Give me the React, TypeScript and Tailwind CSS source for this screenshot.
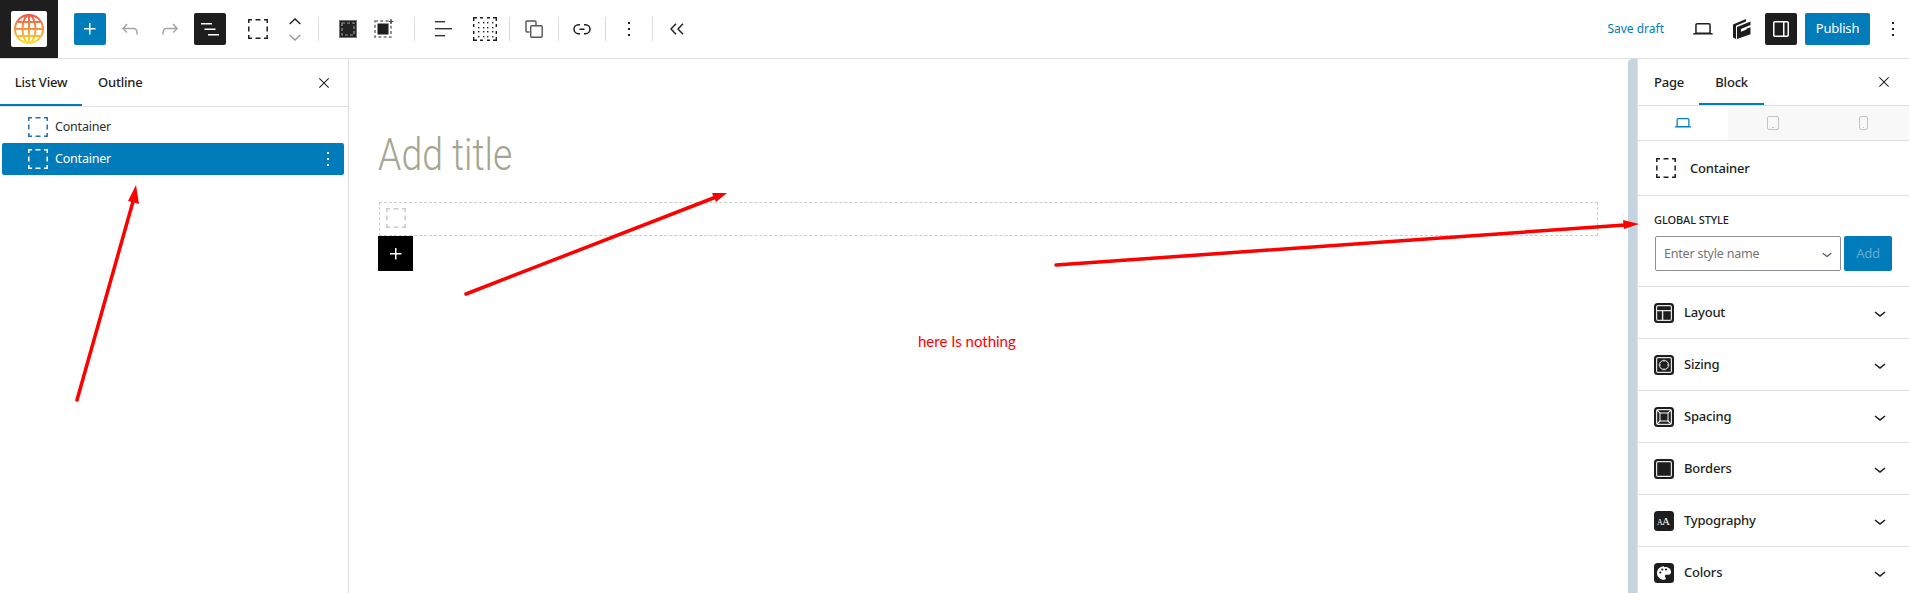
import React from "react";

function Wp({ d, className = "w-6 h-6", fill = "currentColor" }: { d: string; className?: string; fill?: string }) {
  return (
    <svg viewBox="0 0 24 24" className={className} fill={fill}>
      <path d={d} />
    </svg>
  );
}

const plus = "M11 12.5V17.5H12.5V12.5H17.5V11H12.5V6H11V11H6V12.5H11Z";
const undo = "M18.3 11.7c-.6-.6-1.4-.9-2.3-.9H6.7l2.9-3.3-1.1-1-4.5 5L8.5 16l1-1-2.7-2.7H16c.5 0 .9.2 1.3.5 1 1 1 3.4 1 4.5v.3h1.5v-.2c0-1.5 0-4.3-1.5-5.7z";
const redo = "M15.6 6.5l-1.1 1 2.9 3.3H8c-.9 0-1.7.3-2.3.9-1.4 1.5-1.4 4.2-1.4 5.6v.2h1.5v-.3c0-1.1 0-3.5 1-4.5.3-.3.7-.5 1.3-.5h9.2L14.5 15l1.1 1.1 4.6-4.6-4.6-5z";
const listView = "M3 6h11v1.5H3V6Zm3.5 5.5h11V13h-11v-1.5ZM21 17H10v1.5h11V17Z";
const close = "m13.06 12 6.47-6.47-1.06-1.06L12 10.94 5.53 4.47 4.47 5.53 10.94 12l-6.47 6.47 1.06 1.06L12 13.06l6.47 6.47 1.06-1.06L13.06 12Z";
const more = "M13 19h-2v-2h2v2zm0-6h-2v-2h2v2zm0-6h-2V5h2v2z";
const link = "M10 17.389H8.444A5.194 5.194 0 1 1 8.444 7H10v1.5H8.444a3.694 3.694 0 0 0 0 7.389H10v1.5ZM14 7h1.556a5.194 5.194 0 0 1 0 10.39H14v-1.5h1.556a3.694 3.694 0 0 0 0-7.39H14V7Zm-4.5 6h5v-1.5h-5V13Z";
const chevronDown = "M17.5 11.6L12 16l-5.5-4.4.9-1.2L12 14l4.5-3.6 1 1.2z";
const laptop = "M20.5 16h-.7V8c0-1.1-.9-2-2-2H6.2c-1.1 0-2 .9-2 2v8h-.7c-.8 0-1.5.7-1.5 1.5h20c0-.8-.7-1.5-1.5-1.5zM5.7 8c0-.3.2-.5.5-.5h11.6c.3 0 .5.2.5.5v7.6H5.7V8z";
const drawer = "M18 4H6c-1.1 0-2 .9-2 2v12c0 1.1.9 2 2 2h12c1.1 0 2-.9 2-2V6c0-1.1-.9-2-2-2zm-4 14.5H6c-.3 0-.5-.2-.5-.5V6c0-.3.2-.5.5-.5h8v13zm4.5-.5c0 .3-.2.5-.5.5h-2.5v-13H18c.3 0 .5.2.5.5v12z";

function DashedBox({ className = "w-5 h-5", width = 1.5 }: { className?: string; width?: number }) {
  return (
    <svg viewBox="0 0 20 20" className={className} fill="none" stroke="currentColor" strokeWidth={width}>
      <path d="M.8 4V.8H4M7.5.8h5M16 .8h3.2V4M19.2 7.5v5M19.2 16v3.2H16M12.5 19.2h-5M4 19.2H.8V16M.8 12.5v-5" />
    </svg>
  );
}

function Logo() {
  return (
    <svg viewBox="0 0 32 32" className="w-8 h-8" fill="none" stroke="url(#globe)" strokeWidth="2">
      <defs>
        <linearGradient id="globe" gradientUnits="userSpaceOnUse" x1="0" y1="2" x2="0" y2="30">
          <stop offset="0" stopColor="#ee5a4a" />
          <stop offset="0.55" stopColor="#f89a3c" />
          <stop offset="1" stopColor="#fde021" />
        </linearGradient>
      </defs>
      <circle cx="16" cy="16" r="14" />
      <ellipse cx="16" cy="16" rx="6.5" ry="14" />
      <path d="M16 2.5v27M2.5 16h27M4.5 9h23M4.5 23h23" />
    </svg>
  );
}

function Divider() {
  return <div className="w-px h-6 bg-[#dcdcdc]" />;
}

function ParentIcon() {
  return (
    <svg viewBox="0 0 18 18" className="w-[18px] h-[18px]">
      <rect x="0.5" y="0.5" width="17" height="17" fill="#222" stroke="#777" />
      <rect x="3" y="3" width="12" height="12" fill="none" stroke="#999" strokeWidth="1.2" strokeDasharray="3 2" />
    </svg>
  );
}

function InnerIcon() {
  return (
    <svg viewBox="0 0 20 20" className="w-[20px] h-[20px]">
      <rect x="1" y="2" width="16" height="16" fill="none" stroke="#777" strokeWidth="1.6" strokeDasharray="3 2.2" />
      <rect x="3.5" y="4.5" width="11" height="11" fill="#1e1e1e" />
      <path d="M17 0v5M14.5 2.5h5" stroke="#444" strokeWidth="1.2" />
    </svg>
  );
}

function AlignIcon() {
  return (
    <svg viewBox="0 0 18 16" className="w-[18px] h-[16px]" fill="#333">
      <rect x="0" y="0" width="10" height="1.4" />
      <rect x="0" y="7" width="17" height="1.4" />
      <rect x="0" y="14" width="10" height="1.4" />
    </svg>
  );
}

function GridIcon() {
  const dots = [5, 10, 14, 19];
  return (
    <svg viewBox="0 0 24 24" className="w-6 h-6" fill="#1e1e1e">
      <path d="M.7 4V.7H4M7 .7h3M14 .7h3M20 .7h3.3V4M23.3 7v3M23.3 14v3M23.3 20v3.3H20M17 23.3h-3M10 23.3H7M4 23.3H.7V20M.7 17v-3M.7 10V7" fill="none" stroke="#1e1e1e" strokeWidth="1.4" />
      {dots.map((y) => dots.map((x) => <rect key={x + "-" + y} x={x} y={y} width="1.4" height="1.4" />))}
    </svg>
  );
}

function DuplicateIcon() {
  return (
    <svg viewBox="0 0 18 18" className="w-[18px] h-[18px]" fill="none" stroke="#555" strokeWidth="1.4">
      <path d="M4.5 12H2a1 1 0 0 1-1-1V2a1 1 0 0 1 1-1h8a1 1 0 0 1 1 1v3" />
      <rect x="5.7" y="5.7" width="11.5" height="11.5" rx="1" />
    </svg>
  );
}

function BrandIcon() {
  return (
    <svg viewBox="0 0 18 20" className="w-[18px] h-[20px]" fill="#1e1e1e">
      <path d="M0 5.5 13 0v2.5L3 6.8V20l-3-1.5Z" />
      <path d="M4 8 17.5 2.5V6L8 10v2.8l5.5-2.3v-.7l4-1.6v7L4 20Z" />
    </svg>
  );
}

function GoBackIcon() {
  return (
    <svg viewBox="0 0 14 12" className="w-[14px] h-[12px]" fill="none" stroke="#1e1e1e" strokeWidth="1.4">
      <path d="M6 .7 1 6l5 5.3M13 .7 8 6l5 5.3" />
    </svg>
  );
}

function PanelIcon({ children }: { children: React.ReactNode }) {
  return (
    <svg viewBox="0 0 20 20" className="w-5 h-5 shrink-0">
      <rect x="0" y="0" width="20" height="20" rx="3.5" fill="#1e1e1e" />
      {children}
    </svg>
  );
}

function Ring() {
  return <rect x="2.6" y="2.6" width="14.8" height="14.8" rx="1.5" fill="none" stroke="#e6e6e6" strokeWidth="1.2" />;
}

const panels: { label: string; icon: React.ReactNode }[] = [
  {
    label: "Layout",
    icon: (
      <PanelIcon>
        <Ring />
        <path d="M3 7.6h14M8.6 7.6V17" stroke="#e6e6e6" strokeWidth="1.4" />
      </PanelIcon>
    ),
  },
  {
    label: "Sizing",
    icon: (
      <PanelIcon>
        <Ring />
        <circle cx="10" cy="10" r="4.6" fill="none" stroke="#fff" strokeWidth="1" />
        <path d="M10 4 8.4 6.6h3.2ZM10 16 8.4 13.4h3.2ZM4 10 6.6 8.4v3.2ZM16 10 13.4 8.4v3.2Z" fill="#fff" stroke="#1e1e1e" strokeWidth="0.4" />
      </PanelIcon>
    ),
  },
  {
    label: "Spacing",
    icon: (
      <PanelIcon>
        <Ring />
        <rect x="6" y="6" width="8" height="8" fill="none" stroke="#fff" strokeWidth="1" />
        <path d="M3 3l3 3M17 3l-3 3M3 17l3-3M17 17l-3-3" stroke="#fff" strokeWidth="1.1" />
      </PanelIcon>
    ),
  },
  {
    label: "Borders",
    icon: (
      <PanelIcon>
        <Ring />
      </PanelIcon>
    ),
  },
  {
    label: "Typography",
    icon: (
      <PanelIcon>
        <text x="3" y="14" fontSize="8" fill="#fff" fontFamily="Liberation Serif, serif">A</text>
        <text x="8" y="14" fontSize="11" fill="#fff" fontFamily="Liberation Serif, serif">A</text>
      </PanelIcon>
    ),
  },
  {
    label: "Colors",
    icon: (
      <PanelIcon>
        <path d="M10 3.2c-3.9 0-7 3-7 6.8s3.1 6.8 7 6.8c1 0 1.7-.7 1.7-1.6 0-1-.8-1.3-.8-2.1 0-.8.7-1.3 1.5-1.3h1.8c1.7 0 2.9-1.2 2.9-2.7 0-3-3.1-5.9-7.1-4.9Z" fill="#fff" />
        <circle cx="6.3" cy="9.5" r="1.1" fill="#1e1e1e" />
        <circle cx="8.3" cy="6.5" r="1.1" fill="#1e1e1e" />
        <circle cx="12" cy="6.5" r="1.1" fill="#1e1e1e" />
      </PanelIcon>
    ),
  },
];

function TopBar() {
  return (
    <header className="h-[59px] shrink-0 flex items-center border-b border-[#e0e0e0] bg-white">
      <div className="w-[58px] h-[58px] bg-[#1e1e1e] flex items-center justify-center">
        <div className="w-9 h-9 bg-white rounded-[2px] flex items-center justify-center">
          <Logo />
        </div>
      </div>
      <div className="ml-4 flex items-center">
        <button className="w-8 h-8 rounded-[2px] bg-[#007cba] text-white flex items-center justify-center">
          <Wp d={plus} />
        </button>
        <div className="w-6 ml-3 text-[#a5a5a5]"><Wp d={undo} /></div>
        <div className="w-6 ml-4 text-[#a5a5a5]"><Wp d={redo} /></div>
        <button className="ml-3 w-8 h-8 rounded-[2px] bg-[#1e1e1e] text-white flex items-center justify-center">
          <Wp d={listView} />
        </button>
      </div>
      <div className="ml-[22px] text-[#1e1e1e]"><DashedBox /></div>
      <div className="ml-[19px] w-[16px] flex flex-col items-center gap-[1px]">
        <svg viewBox="0 0 12 7" className="w-[12px] h-[7px]" fill="none" stroke="#1e1e1e" strokeWidth="1.4"><path d="M.7 6 6 1l5.3 5" /></svg>
        <svg viewBox="0 0 12 7" className="mt-[8px] w-[12px] h-[7px]" fill="none" stroke="#999" strokeWidth="1.4"><path d="M.7 1 6 6l5.3-5" /></svg>
      </div>
      <div className="ml-[15px]"><Divider /></div>
      <div className="ml-[20px]"><ParentIcon /></div>
      <div className="ml-[17px]"><InnerIcon /></div>
      <div className="ml-5"><Divider /></div>
      <div className="ml-[20px]"><AlignIcon /></div>
      <div className="ml-[20px]"><GridIcon /></div>
      <div className="ml-[12px]"><Divider /></div>
      <div className="ml-[15px]"><DuplicateIcon /></div>
      <div className="ml-[15px]"><Divider /></div>
      <div className="ml-[11px] text-[#1e1e1e]"><Wp d={link} /></div>
      <div className="ml-[11px]"><Divider /></div>
      <div className="ml-[11px] text-[#1e1e1e]"><Wp d={more} /></div>
      <div className="ml-[11px]"><Divider /></div>
      <div className="ml-[17px]"><GoBackIcon /></div>
      <div className="ml-auto flex items-center">
        <span className="text-[12px] text-[#007cba]">Save draft</span>
        <div className="ml-[27px] text-[#1e1e1e]"><Wp d={laptop} /></div>
        <div className="ml-[18px]"><BrandIcon /></div>
        <button className="ml-[14px] w-8 h-8 rounded-[2px] bg-[#1e1e1e] text-white flex items-center justify-center">
          <Wp d={drawer} />
        </button>
        <button className="ml-2 w-[65px] h-8 rounded-[2px] bg-[#007cba] text-white text-[13px] tracking-[-0.2px]">Publish</button>
        <div className="ml-[11px] mr-1 text-[#1e1e1e]"><Wp d={more} /></div>
      </div>
    </header>
  );
}

function ListPanel() {
  return (
    <aside className="w-[349px] shrink-0 border-r border-[#dcdcdc] bg-white">
      <div className="h-[48px] flex items-center border-b border-[#e0e0e0] text-[13px] tracking-[-0.2px] text-[#1e1e1e] font-medium">
        <div className="w-[82px] h-full flex items-center justify-center shadow-[inset_0_-2px_0_#007cba]">List View</div>
        <div className="ml-[16px]">Outline</div>
        <div className="ml-auto mr-[16px]"><Wp d={close} className="w-4 h-4" /></div>
      </div>
      <div className="pt-[4px] px-[2px]">
        <div className="h-[32px] flex items-center pl-[26px] text-[12.5px] tracking-[-0.2px] text-[#2f2f2f]">
          <span className="text-[#2271b1]"><DashedBox /></span>
          <span className="ml-[7px] pt-px">Container</span>
        </div>
        <div className="h-[32px] flex items-center pl-[26px] text-[12.5px] tracking-[-0.2px] text-white bg-[#007cba] rounded-[2px] w-[342px]">
          <DashedBox />
          <span className="ml-[7px] pt-px">Container</span>
          <div className="ml-auto mr-[4px]"><Wp d={more} className="w-6 h-6" /></div>
        </div>
      </div>
    </aside>
  );
}

function Canvas() {
  return (
    <main className="flex-1 min-w-0 bg-white pl-[30px] pr-[30px]">
      <h1 className="mt-[74px] h-[44px] text-[44px] leading-[44px] font-light text-[#a4a68f] font-['Roboto'] scale-x-[0.85] origin-left -ml-px">Add title</h1>
      <div className="mt-[25px] h-[34px] border border-dashed border-[#cccccc] pl-[6px] pt-[5px] text-[#cccccc]">
        <DashedBox />
      </div>
      <button className="w-[35px] h-[35px] -ml-px bg-black text-white flex items-center justify-center">
        <Wp d={plus} />
      </button>
      <p className="mt-[60px] ml-[539px] text-[15px] leading-5 text-[#ff0000] font-['Lato']">here Is nothing</p>
    </main>
  );
}

function SettingsPanel() {
  return (
    <aside className="w-[272px] shrink-0 border-l border-[#e0e0e0] bg-white text-[#1e1e1e]">
      <div className="h-[47px] flex items-center border-b border-[#e0e0e0] text-[13px] tracking-[-0.2px] font-medium">
        <div className="ml-[16px] pt-px">Page</div>
        <div className="ml-[15px] w-[65px] h-full pt-px flex items-center justify-center shadow-[inset_0_-2px_0_#007cba]">Block</div>
        <div className="ml-auto mr-[17px]"><Wp d={close} className="w-4 h-4" /></div>
      </div>
      <div className="h-[35px] flex border-b border-[#e0e0e0]">
        <div className="w-[90px] flex items-center justify-center text-[#007cba]"><Wp d={laptop} className="w-[20px] h-[20px]" /></div>
        <div className="flex-1 bg-[#f8f8f8] flex items-center justify-center">
          <svg viewBox="0 0 12 14" className="w-[12px] h-[14px]" fill="none" stroke="#c4c4c4" strokeWidth="1"><rect x="0.5" y="0.5" width="11" height="13" rx="1.5" /><path d="M5 11.5h2" /></svg>
        </div>
        <div className="flex-1 bg-[#f8f8f8] flex items-center justify-center">
          <svg viewBox="0 0 9 14" className="w-[9px] h-[14px]" fill="none" stroke="#c4c4c4" strokeWidth="1"><rect x="0.5" y="0.5" width="8" height="13" rx="1.5" /><path d="M4 11.5h1" /></svg>
        </div>
      </div>
      <div className="h-[55px] flex items-center pl-[18px] border-b border-[#e0e0e0]">
        <DashedBox />
        <span className="ml-[14px] pt-px text-[13px] tracking-[-0.2px] font-medium">Container</span>
      </div>
      <div className="h-[91px] px-[16px] pt-[17px] border-b border-[#e0e0e0]">
        <div className="text-[11px] leading-[14px] font-medium uppercase tracking-[-0.1px]">Global Style</div>
        <div className="mt-[9px] flex ml-px gap-[3px]">
          <div className="w-[186px] h-[35px] border border-[#8c8f94] rounded-[2px] flex items-center pl-[8px] pr-[3px] text-[12.5px] tracking-[-0.2px] text-[#757575]">
            <span className="pt-px">Enter style name</span>
            <Wp d={chevronDown} className="w-5 h-5 ml-auto text-[#50575e]" />
          </div>
          <button className="w-[48px] h-[35px] rounded-[2px] bg-[#007cba] text-[13px] tracking-[-0.2px] text-[#69a9cb]">Add</button>
        </div>
      </div>
      {panels.map((p) => (
        <div key={p.label} className="h-[52px] flex items-center pl-[16px] pr-[17px] border-b border-[#e0e0e0]">
          {p.icon}
          <span className="ml-[10px] pt-px text-[13px] tracking-[-0.2px] font-medium">{p.label}</span>
          <Wp d={chevronDown} className="w-6 h-6 ml-auto" />
        </div>
      ))}
    </aside>
  );
}

export default function App() {
  return (
    <div className="relative w-[1909px] h-[593px] overflow-hidden flex flex-col bg-white font-['Noto_Sans',sans-serif]">
      <TopBar />
      <div className="flex flex-1 min-h-0">
        <ListPanel />
        <Canvas />
        <div className="w-[9px] shrink-0 bg-[#c5d4df] rounded-tl-[4px]" />
        <SettingsPanel />
      </div>
      {/* red annotation arrows drawn over the page */}
      <svg className="absolute inset-0 w-[1909px] h-[593px] pointer-events-none" viewBox="0 0 1909 593" fill="#ff0000" stroke="none">
        <path d="M77 400 134 198" stroke="#ff0000" strokeWidth="3.5" strokeLinecap="round" />
        <path d="M136 185 128 201 139 204Z" />
        <path d="M466 294 716 197" stroke="#ff0000" strokeWidth="3.5" strokeLinecap="round" />
        <path d="M727 193 712 193 716 202Z" />
        <path d="M1056 265 1625 225" stroke="#ff0000" strokeWidth="3.5" strokeLinecap="round" />
        <path d="M1639 224 1623 220 1624 229Z" />
      </svg>
    </div>
  );
}
